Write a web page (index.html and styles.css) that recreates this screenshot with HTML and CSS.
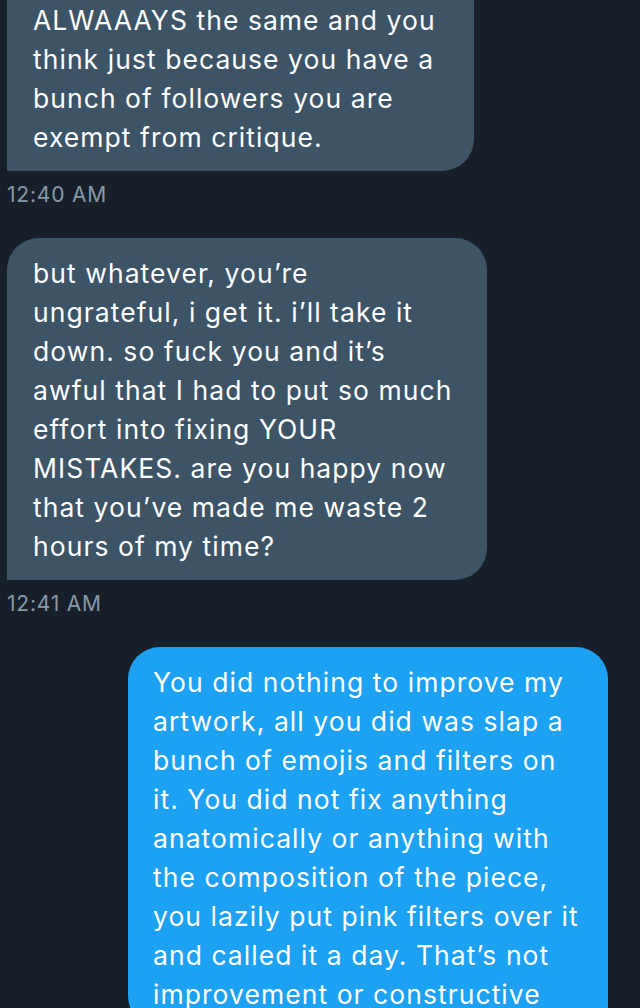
FILE: index.html
```html
<!DOCTYPE html>
<html>
<head>
<meta charset="utf-8">
<link rel="stylesheet" href="styles.css">
</head>
<body>
<div class="thread">
  <div class="msg received">
    <div class="bubble first">ALWAAAYS the same and you<br>think just because you have a<br>bunch of followers you are<br>exempt from critique.</div>
    <div class="time">12:40 AM</div>
  </div>
  <div class="msg received">
    <div class="bubble wide">but whatever, you’re<br>ungrateful, i get it. i’ll take it<br>down. so fuck you and it’s<br>awful that I had to put so much<br>effort into fixing YOUR<br>MISTAKES. are you happy now<br>that you’ve made me waste 2<br>hours of my time?</div>
    <div class="time">12:41 AM</div>
  </div>
  <div class="msg sent">
    <div class="bubble blue">You did nothing to improve my<br>artwork, all you did was slap a<br>bunch of emojis and filters on<br>it. You did not fix anything<br>anatomically or anything with<br>the composition of the piece,<br>you lazily put pink filters over it<br>and called it a day. That’s not<br>improvement or constructive</div>
  </div>
</div>
</body>
</html>
```
FILE: styles.css
```css
html, body {
  margin: 0;
  padding: 0;
  background: #17202a;
}
body {
  width: 640px;
  height: 1008px;
  overflow: hidden;
  font-family: Inter, "Liberation Sans", Arial, sans-serif;
  color: #ffffff;
}
.thread {
  display: flex;
  flex-direction: column;
  padding: 0 32px 0 7px;
}
.msg {
  display: flex;
  flex-direction: column;
  margin-bottom: 31px;
}
.msg.sent {
  align-items: flex-end;
}
.bubble {
  font-size: 26.5px;
  letter-spacing: 1.05px;
  line-height: 39px;
  padding: 16px 10px 14px 26px;
  box-sizing: border-box;
  background: #3d5366;
  border-radius: 32px 32px 32px 0;
  white-space: nowrap;
}
.bubble.first {
  width: 467px;
  padding-top: 1px;
  padding-bottom: 14px;
  border-radius: 0 0 32px 0;
}
.bubble.wide {
  width: 480px;
}
.bubble.blue {
  width: 480px;
  background: #1da1f2;
  padding-left: 25px;
  border-radius: 32px 32px 0 32px;
}
.time {
  margin-top: 12px;
  font-size: 21px;
  letter-spacing: 0.8px;
  line-height: 24px;
  color: #8899a6;
}
```
